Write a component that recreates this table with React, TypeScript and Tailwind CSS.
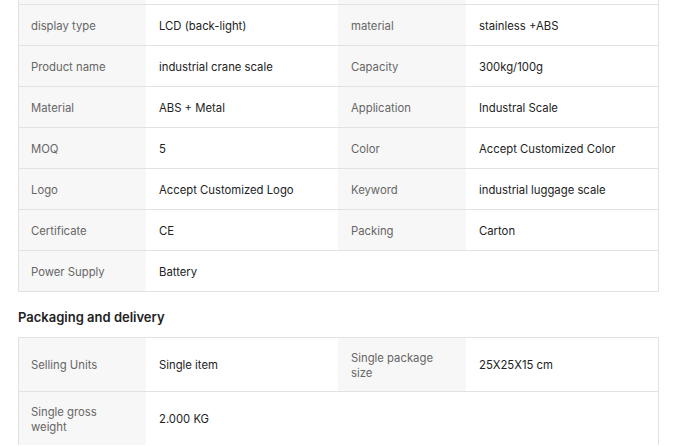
type Cell = { label: string; value: string } | null;

const specs: [Cell, Cell][] = [
  [{ label: "display type", value: "LCD (back-light)" }, { label: "material", value: "stainless +ABS" }],
  [{ label: "Product name", value: "industrial crane scale" }, { label: "Capacity", value: "300kg/100g" }],
  [{ label: "Material", value: "ABS + Metal" }, { label: "Application", value: "Industral Scale" }],
  [{ label: "MOQ", value: "5" }, { label: "Color", value: "Accept Customized Color" }],
  [{ label: "Logo", value: "Accept Customized Logo" }, { label: "Keyword", value: "industrial luggage scale" }],
  [{ label: "Certificate", value: "CE" }, { label: "Packing", value: "Carton" }],
  [{ label: "Power Supply", value: "Battery" }, null],
];

const packaging: [Cell, Cell][] = [
  [{ label: "Selling Units", value: "Single item" }, { label: "Single package size", value: "25X25X15 cm" }],
  [{ label: "Single gross weight", value: "2.000 KG" }, null],
];

function Pair({ cell, second }: { cell: Cell; second?: boolean }) {
  if (!cell) {
    return (
      <>
        <div />
        <div />
      </>
    );
  }
  return (
    <>
      <div
        className={`bg-[#f7f7f7] ${second ? "pl-[13px]" : "pl-3"} pr-3 pt-[2px] flex items-center text-[#666666] leading-[15px]`}
      >
        {cell.label}
      </div>
      <div className="px-[13px] pt-[2px] flex items-center text-[#222222] leading-[15px]">{cell.value}</div>
    </>
  );
}

export default function App() {
  return (
    <div className="w-[694px] h-[446px] overflow-hidden bg-white font-['Inter','Liberation_Sans',sans-serif]">
      <div className="pl-[18px]">
        <div className="w-[641px] border-x border-b border-[#e2e2e2] text-[11.3px]">
          <div className="grid grid-cols-[127px_192px_128px_192px] h-[4px]">
            <div className="bg-[#f7f7f7]" />
            <div />
            <div className="bg-[#f7f7f7]" />
            <div />
          </div>
          {specs.map((r, i) => (
            <div key={i} className="grid grid-cols-[127px_192px_128px_192px] border-t border-[#e2e2e2] h-[41px]">
              <Pair cell={r[0]} />
              <Pair cell={r[1]} second />
            </div>
          ))}
        </div>
        <h2 className="mt-[15px] mb-[10px] h-[20px] leading-[20px] text-[13px] font-semibold text-[#222222]">
          Packaging and delivery
        </h2>
        <div className="w-[641px] border-x border-[#e2e2e2] text-[11.3px]">
          {packaging.map((r, i) => (
            <div key={i} className="grid grid-cols-[127px_192px_128px_192px] border-t border-[#e2e2e2] h-[54px]">
              <Pair cell={r[0]} />
              <Pair cell={r[1]} second />
            </div>
          ))}
        </div>
      </div>
    </div>
  );
}
